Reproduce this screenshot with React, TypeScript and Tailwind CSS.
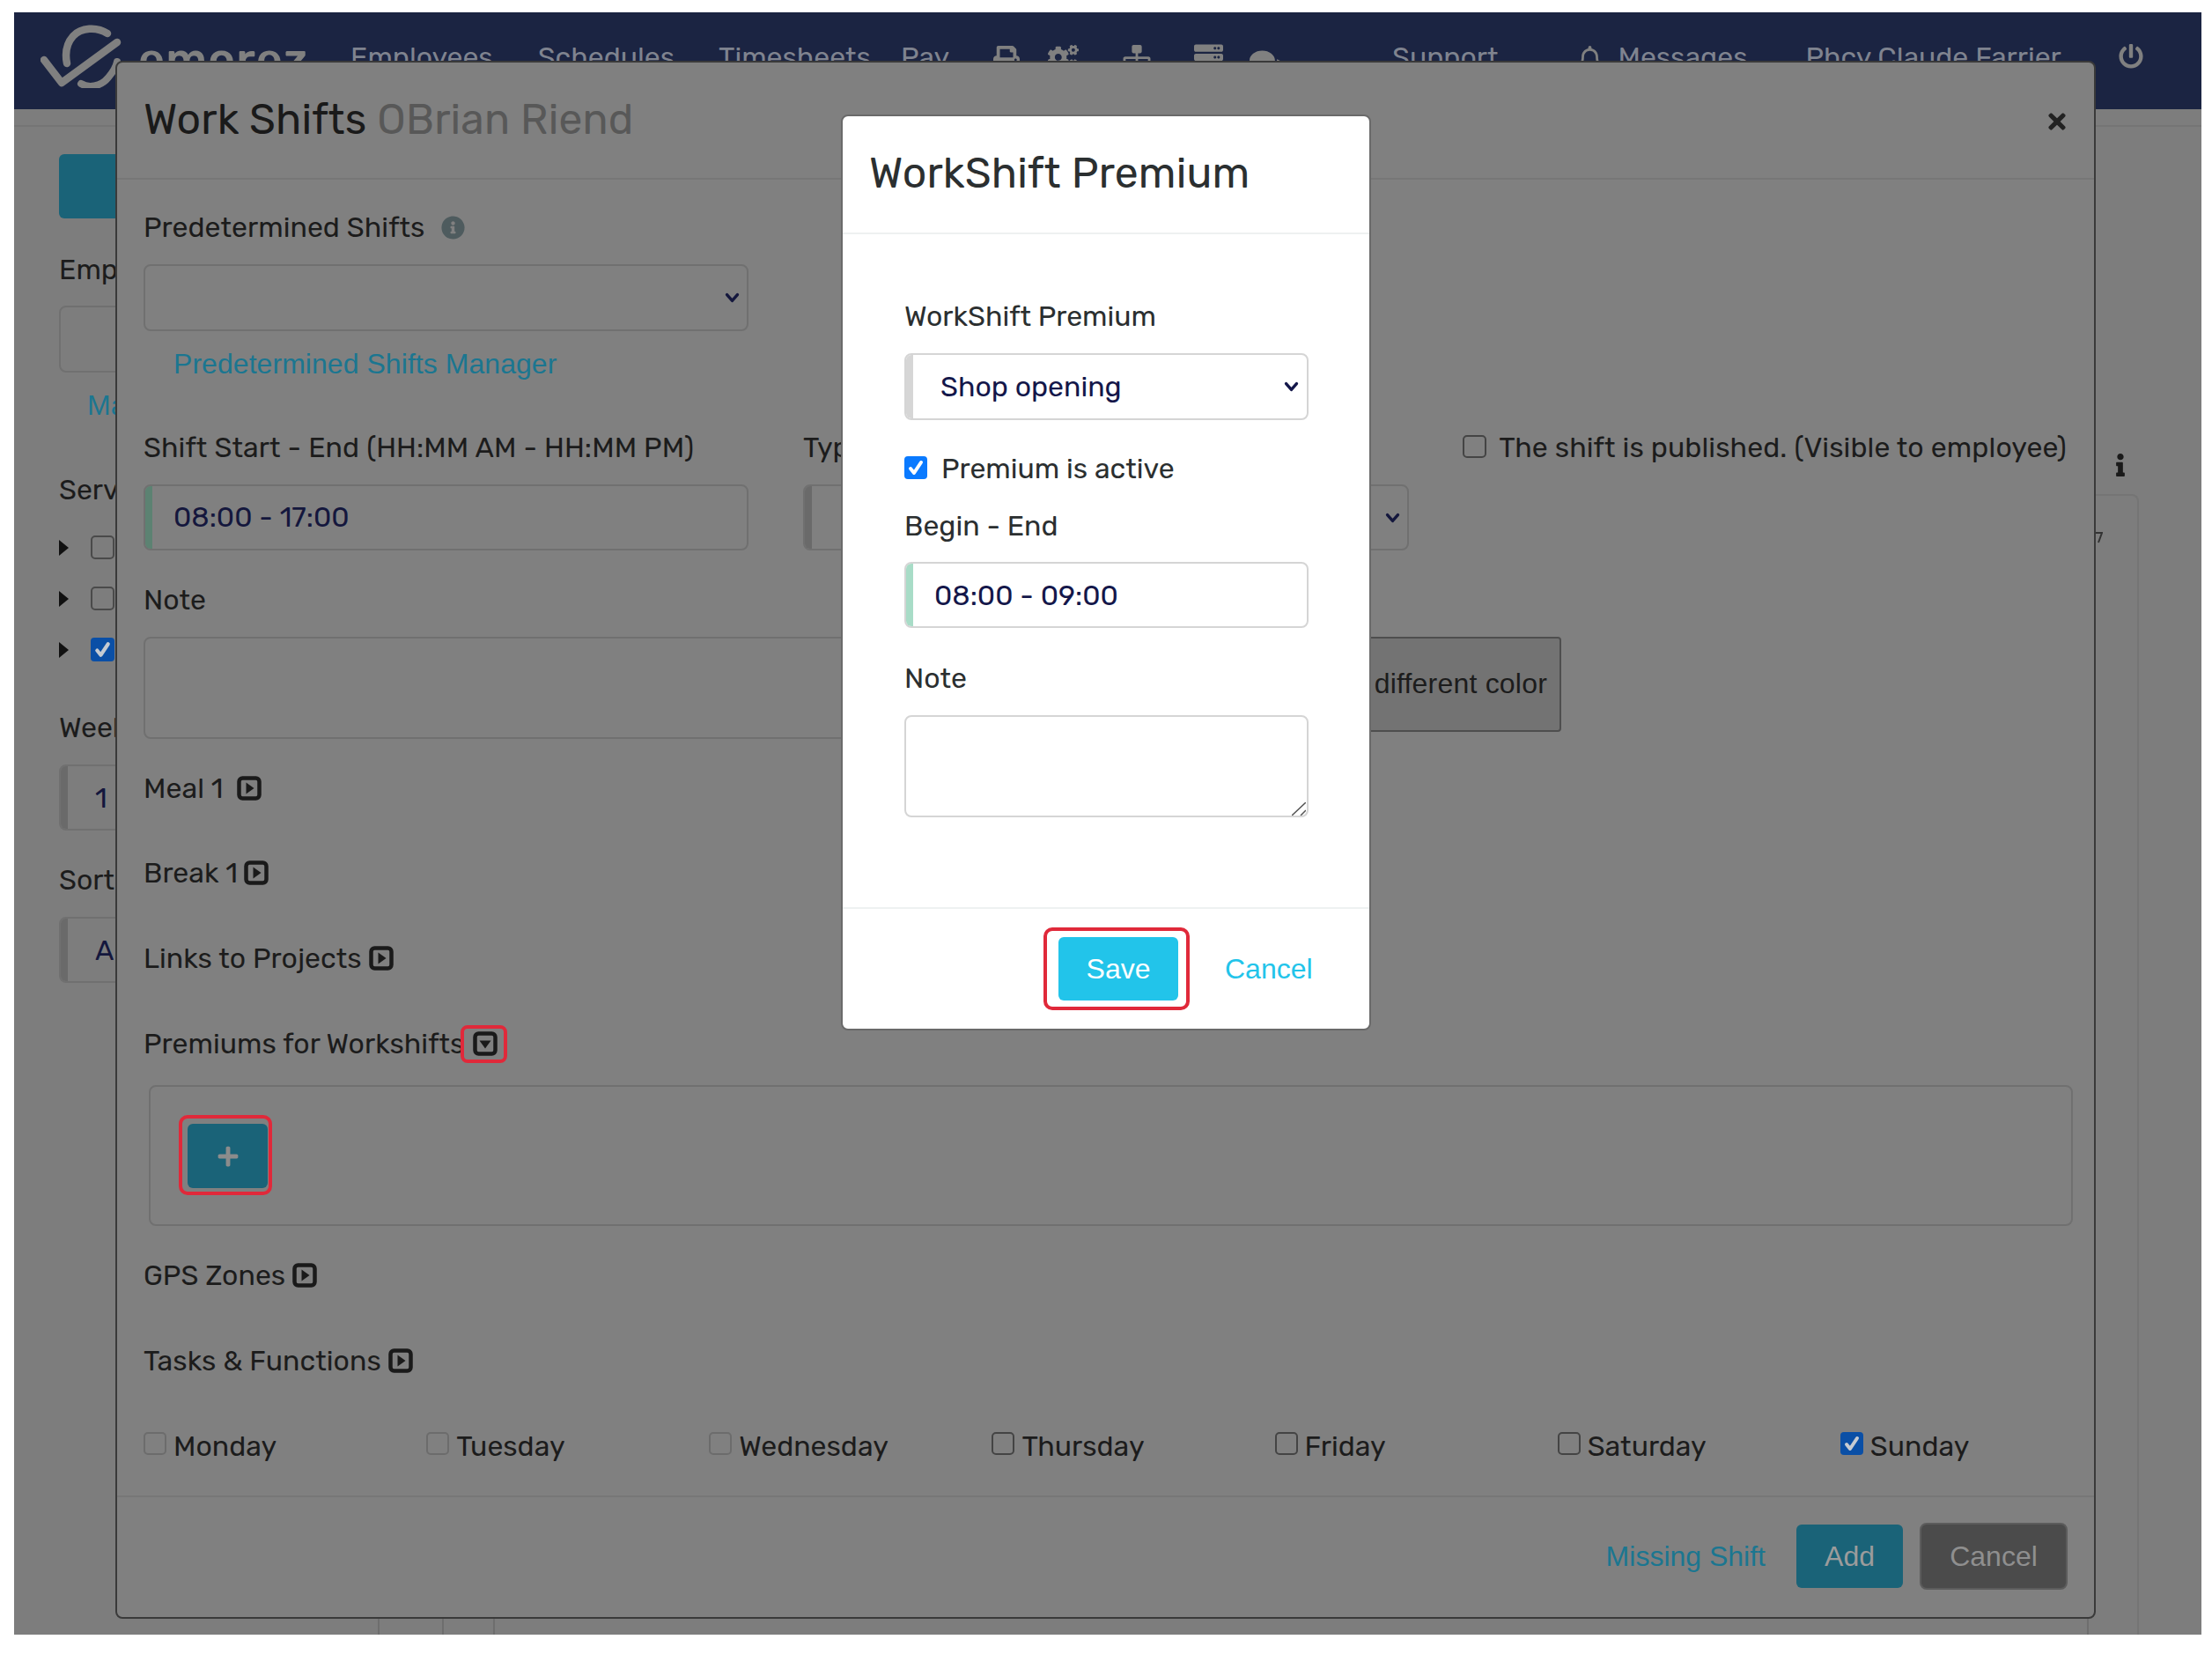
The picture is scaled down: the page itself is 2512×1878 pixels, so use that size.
import React from "react";
import { FaPrint, FaCogs, FaSitemap, FaServer, FaComments, FaRegBell, FaPowerOff, FaInfoCircle, FaInfo, FaTimes, FaPlus } from "react-icons/fa";

const sans = "font-['Rubik','Inter','Noto_Sans',sans-serif]";
const arial = "font-['Liberation_Sans',Arial,sans-serif]";

function Chevron({ className = "" }: { className?: string }) {
  return (
    <svg viewBox="0 0 20 14" className={"w-[17px] h-[12px] " + className} fill="none" stroke="currentColor" strokeWidth="4" strokeLinecap="round" strokeLinejoin="round">
      <path d="M3 3l7 8 7-8" />
    </svg>
  );
}

function Check({ bg, tick }: { bg: string; tick: string }) {
  return (
    <span className={"block w-full h-full rounded-[4px] " + bg}>
      <svg viewBox="0 0 26 26" className="w-full h-full" fill="none" stroke={tick} strokeWidth="4" strokeLinecap="round" strokeLinejoin="round">
        <path d="M7 14l4 5 8-12" />
      </svg>
    </span>
  );
}

function Box({ className = "" }: { className?: string }) {
  return <span className={"block shrink-0 rounded-[5px] border-2 " + className} />;
}

function Logo() {
  return (
    <svg viewBox="0 0 94 72" className="w-[94px] h-[72px] shrink-0" fill="none" stroke="#808080" strokeLinecap="round" strokeLinejoin="round">
      <path d="M4 40L24 66L87 20" strokeWidth="8.5" />
      <path d="M76 10C64 2 46 3 37 13C29 22 28 34 30 44" strokeWidth="8.5" />
      <path d="M46 67C54 72 68 71 77 60C83 53 86 47 87 42" strokeWidth="8" />
    </svg>
  );
}

function SquareCaret({ down = false }: { down?: boolean }) {
  return (
    <svg viewBox="0 0 28 28" className="w-[28px] h-[28px] shrink-0" fill="none">
      <rect x="2.5" y="2.5" width="23" height="23" rx="4" stroke="#1a1a1a" strokeWidth="4.5" />
      <path d={down ? "M7.5 10.5h13L14 19.5z" : "M10.5 7.5v13l9-6.5z"} fill="#1a1a1a" />
    </svg>
  );
}

function Toggle({ label, down = false, gap }: { label: string; down?: boolean; gap: string }) {
  return (
    <div className={"flex items-center h-[40px] text-[32px] leading-none tracking-[0.05px] text-[#1c1c1c] " + gap}>
      <span>{label}</span>
      {down ? (
        <span className="relative flex w-[28px] h-[28px]">
          <SquareCaret down />
          <span className="absolute left-[-14px] top-[-7px] w-[53px] h-[43px] rounded-[8px] border-4 border-[#e0293a]" />
        </span>
      ) : (
        <SquareCaret />
      )}
    </div>
  );
}

const days = [
  { d: "Monday", faint: true, on: false },
  { d: "Tuesday", faint: true, on: false },
  { d: "Wednesday", faint: true, on: false },
  { d: "Thursday", faint: false, on: false },
  { d: "Friday", faint: false, on: false },
  { d: "Saturday", faint: false, on: false },
  { d: "Sunday", faint: false, on: true },
];

function Field({ bar, children, className = "" }: { bar: string; children?: React.ReactNode; className?: string }) {
  return (
    <div className={"flex overflow-hidden rounded-[8px] border-2 " + className}>
      <span className={"w-[8px] shrink-0 " + bar} />
      {children}
    </div>
  );
}

function TreeCaret() {
  return (
    <svg viewBox="0 0 11 18" className="w-[11px] h-[18px] shrink-0">
      <path d="M0 0L11 9L0 18z" fill="#111" />
    </svg>
  );
}

export default function App() {
  return (
    <div className={"relative w-[2512px] h-[1878px] bg-white overflow-hidden " + sans}>
      <div className="ml-[16px] mr-[12px] mt-[14px] h-[1842px] bg-[#7d7d7d] flex flex-col">
        {/* top navigation */}
        <header className="h-[110px] shrink-0 bg-[#1b2442] flex items-start pl-[30px] text-[32px] leading-none text-[#7f838f]">
          <div className="mt-[14px]"><Logo /></div>
          <span className="ml-[17px] mt-[27px] w-[194px] text-[52px] leading-none font-medium text-[#808080] tracking-[1.2px]">emorez</span>
          <nav className="flex items-start mt-[27px]">
            <span className="ml-[47px] mt-[8px]">Employees</span>
            <span className="ml-[51px] mt-[8px]">Schedules</span>
            <span className="ml-[50px] mt-[8px]">Timesheets</span>
            <span className="ml-[34px] mt-[8px]">Pay</span>
            <FaPrint className="ml-[50px] mt-[11px] w-[30px] h-[30px] text-[#808080]" />
            <FaCogs className="ml-[32px] mt-[8px] w-[35px] h-[32px] text-[#808080]" />
            <FaSitemap className="ml-[47px] mt-[10px] w-[38px] h-[30px] text-[#808080]" />
            <FaServer className="ml-[46px] mt-[7px] w-[33px] h-[34px] text-[#808080]" />
            <FaComments className="ml-[30px] mt-[14px] w-[40px] h-[36px] text-[#808080]" />
            <span className="ml-[122px] mt-[8px]">Support</span>
            <FaRegBell className="ml-[90px] mt-[11px] w-[29px] h-[30px] text-[#808080]" />
            <span className="ml-[17px] mt-[8px]">Messages</span>
            <span className="ml-[66px] mt-[8px]">Phcy Claude Farrier</span>
            <FaPowerOff className="ml-[65px] mt-[8px] w-[28px] h-[30px] text-[#808080]" />
          </nav>
        </header>

        {/* page beneath the dialogs */}
        <main className="flex-1 flex border-t-2 border-[#757575] mt-[18px] text-[32px] leading-none text-[#1c1c1c]">
          <aside className="w-[116px] pl-[51px] overflow-hidden">
            <div className="mt-[31px] w-[100px] h-[73px] bg-[#1a6378] rounded-[6px]" />
            <div className="mt-[41px] h-[34px] leading-[34px]">Employee</div>
            <div className="mt-[24px] w-[100px] h-[76px] border-2 border-[#707070] rounded-[8px]" />
            <div className={"mt-[20px] ml-[32px] h-[34px] leading-[34px] text-[#1b7690] " + arial}>Manager</div>
            <div className="mt-[62px] h-[34px] leading-[34px]">Services</div>
            <div className="mt-[35px] flex flex-col gap-[31px]">
              {[false, false, true].map((on, i) => (
                <div key={i} className="flex items-center gap-[25px] h-[27px]">
                  <TreeCaret />
                  {on ? (
                    <span className="w-[27px] h-[27px] shrink-0"><Check bg="bg-[#0a4fa6]" tick="#c5cbd2" /></span>
                  ) : (
                    <Box className="w-[27px] h-[27px] border-[#4a4a4a]" />
                  )}
                </div>
              ))}
            </div>
            <div className="mt-[58px] h-[34px] leading-[34px]">Week</div>
            <Field bar="bg-[#6a6a6a]" className="mt-[25px] w-[100px] h-[75px] border-[#707070]">
              <span className="ml-[31px] self-center text-[#14173d]">1</span>
            </Field>
            <div className="mt-[39px] h-[34px] leading-[34px]">Sort</div>
            <Field bar="bg-[#6a6a6a]" className="mt-[25px] w-[100px] h-[75px] border-[#707070]">
              <span className="ml-[31px] self-center text-[#14173d]">A</span>
            </Field>
          </aside>
          <div className="flex-1 flex">
            <div className="ml-auto mr-[71px] w-[60px] mt-[417px] border-r-2 border-t-2 rounded-tr-[8px] border-[#757575]" />
          </div>
        </main>
      </div>

      {/* pieces visible around the first dialog */}
      <div className="absolute left-[429px] top-[1837px] h-[19px] flex">
        <span className="w-[2px] bg-[#6e6e6e]" />
        <span className="w-[2px] bg-[#6e6e6e] ml-[71px]" />
        <span className="w-[2px] bg-[#6e6e6e] ml-[56px]" />
      </div>
      <span className="absolute left-[2370px] top-[1837px] h-[19px] w-[2px] bg-[#6e6e6e]" />
      <FaInfo className="absolute left-[2401px] top-[515px] w-[14px] h-[26px] text-[#1a1a1a]" />
      <svg viewBox="0 0 8 14" className="absolute left-[2380px] top-[603px] w-[8px] h-[14px]" fill="none" stroke="#333" strokeWidth="2">
        <path d="M0 2h7L3 13" />
      </svg>

      {/* first dialog */}
      <section className="absolute left-[131px] top-[69px] w-[2249px] h-[1769px] bg-[#808080] border-2 border-[#3a3a3a] rounded-[8px] flex flex-col text-[32px] leading-none text-[#1c1c1c]">
        <div className="h-[133px] shrink-0 border-b-2 border-[#777] flex items-center justify-between pl-[30px] pr-[29px]">
          <h1 className="text-[48px] leading-none font-normal -mt-[1px] tracking-[0.15px]">
            <span className="text-[#1a1a1a]">Work Shifts</span> <span className="text-[#585858]">OBrian Riend</span>
          </h1>
          <FaTimes className="w-[26px] h-[28px] text-[#222] mt-[3px]" />
        </div>

        <div className="flex-1 pl-[30px] pr-[20px]">
          <div className="flex items-center gap-[19px] mt-[37px] h-[34px] tracking-[0.05px]">
            <span>Predetermined Shifts</span>
            <FaInfoCircle className="w-[27px] h-[27px] text-[#4e5b5e]" />
          </div>
          <div className="mt-[25px] w-[687px] h-[76px] rounded-[8px] border-2 border-[#707070] flex items-center justify-end pr-[8px] text-[#14173d]">
            <Chevron />
          </div>
          <div className={"mt-[19px] ml-[34px] h-[37px] leading-[37px] text-[32px] tracking-[0.05px] text-[#1b7690] " + arial}>Predetermined Shifts Manager</div>

          {/* shift row */}
          <div className="flex mt-[57px]">
            <div className="w-[749px]">
              <div className="h-[38px] leading-[38px] tracking-[0.1px]">Shift Start - End (HH:MM AM - HH:MM PM)</div>
              <Field bar="bg-[#5c8272]" className="mt-[23px] w-[687px] h-[75px] border-[#707070]">
                <span className="ml-[24px] self-center -mt-[2px] text-[#14173d]">08:00 - 17:00</span>
              </Field>
            </div>
            <div className="w-[688px]">
              <div className="h-[38px] leading-[38px]">Type</div>
              <Field bar="bg-[#6a6a6a]" className="mt-[23px] w-[688px] h-[75px] border-[#707070]">
                <span className="flex-1" />
                <Chevron className="self-center mr-[8px] text-[#14173d]" />
              </Field>
            </div>
            <div className="flex items-center gap-[14px] ml-auto mr-[11px] h-[38px] tracking-[0.1px]">
              <Box className="w-[27px] h-[26px] border-[#444] -mt-[3px]" />
              <span>The shift is published. (Visible to employee)</span>
            </div>
          </div>

          {/* note row */}
          <div className="h-[38px] leading-[38px] mt-[37px]">Note</div>
          <div className="flex mt-[23px] items-start">
            <div className="w-[1352px] h-[116px] rounded-[8px] border-2 border-[#707070]" />
            <div className={"w-[258px] h-[108px] rounded-[4px] bg-[#737373] border-2 border-[#4e4e4e] flex items-center justify-end pr-[14px] whitespace-nowrap tracking-[0.2px] " + arial}>
              <span className="-mt-[2px]">different color</span>
            </div>
          </div>

          <div className="mt-[36px]"><Toggle label="Meal 1" gap="gap-[15px]" /></div>
          <div className="mt-[56px]"><Toggle label="Break 1" gap="gap-[7px]" /></div>
          <div className="mt-[57px]"><Toggle label="Links to Projects" gap="gap-[8px]" /></div>
          <div className="mt-[57px]"><Toggle label="Premiums for Workshifts" down gap="gap-[10px]" /></div>

          <div className="mt-[27px] ml-[6px] w-[2185px] h-[160px] rounded-[8px] border-2 border-[#707070] flex items-center pl-[32px]">
            <div className="pl-[6px] pr-[1px] pt-[6px] pb-[4px] -mt-[1px] rounded-[10px] border-4 border-[#e0293a]">
              <button className="flex items-center justify-center w-[91px] h-[73px] rounded-[6px] bg-[#1a6378]">
                <FaPlus className="w-[26px] h-[26px] text-[#8c8c8c]" />
              </button>
            </div>
          </div>

          <div className="mt-[36px]"><Toggle label="GPS Zones" gap="gap-[8px]" /></div>
          <div className="mt-[57px]"><Toggle label="Tasks & Functions" gap="gap-[8px]" /></div>

          <div className="grid grid-cols-7 mt-[57px] w-[2248px] h-[40px]">
            {days.map((x) => (
              <div key={x.d} className="flex items-center gap-[8px]">
                {x.on ? (
                  <span className="w-[26px] h-[26px] -mt-[6px] shrink-0"><Check bg="bg-[#0a4fa6]" tick="#c5cbd2" /></span>
                ) : (
                  <Box className={"w-[26px] h-[26px] -mt-[6px] " + (x.faint ? "border-[#6c6c6c]" : "border-[#444]")} />
                )}
                <span>{x.d}</span>
              </div>
            ))}
          </div>
        </div>

        <div className={"h-[138px] shrink-0 border-t-2 border-[#777] flex items-center justify-end pr-[30px] pb-[2px] gap-[19px] " + arial}>
          <span className="text-[#1b7690] mr-[16px]">Missing Shift</span>
          <button className="w-[121px] h-[72px] rounded-[6px] bg-[#1a6378] text-[#9c9c9c]">Add</button>
          <button className="w-[168px] h-[76px] rounded-[8px] bg-[#4b4b4b] border-2 border-[#5c5c5c] text-[#8f8f8f]">Cancel</button>
        </div>
      </section>

      {/* second dialog */}
      <section className="absolute left-[955px] top-[130px] w-[602px] h-[1040px] bg-white rounded-[8px] border-2 border-[#6a6a6a] flex flex-col text-[32px] leading-none text-[#2b2f30]">
        <div className="h-[134px] shrink-0 border-b-2 border-[#eef1f1] flex items-center pl-[30px]">
          <h2 className="text-[48px] leading-none font-normal -mt-[3px] tracking-[0.2px]">WorkShift Premium</h2>
        </div>
        <div className="flex-1 pl-[70px] pr-[70px]">
          <div className="mt-[74px] h-[38px] leading-[38px]">WorkShift Premium</div>
          <Field bar="bg-[#d6d6d6]" className="mt-[23px] w-[459px] h-[76px] border-[#d5d5d5]">
            <span className="flex-1 ml-[31px] self-center text-[#14174a]">Shop opening</span>
            <Chevron className="self-center mr-[9px] text-[#14174a]" />
          </Field>
          <div className="flex items-center gap-[16px] mt-[36px] h-[38px]">
            <span className="w-[26px] h-[26px] -mt-[2px] shrink-0"><Check bg="bg-[#0a7aff]" tick="#ffffff" /></span>
            <span>Premium is active</span>
          </div>
          <div className="mt-[27px] h-[38px] leading-[38px]">Begin - End</div>
          <Field bar="bg-[#a8dcc7]" className="mt-[22px] w-[459px] h-[75px] border-[#d5d5d5]">
            <span className="ml-[24px] self-center text-[#14174a]">08:00 - 09:00</span>
          </Field>
          <div className="mt-[38px] h-[38px] leading-[38px]">Note</div>
          <div className="relative mt-[23px] w-[459px] h-[116px]">
            <textarea readOnly className="block w-full h-full resize-none rounded-[8px] border-2 border-[#d5d5d5] bg-white outline-none" />
            <svg viewBox="0 0 16 15" className="absolute right-[3px] bottom-[2px] w-[16px] h-[15px]" fill="none" stroke="#555" strokeWidth="1.5">
              <path d="M0 15L16 0M10 15l6-6" />
            </svg>
          </div>
        </div>
        <div className={"h-[138px] shrink-0 border-t-2 border-[#eef1f1] flex items-center pl-[228px] " + arial}>
          <div className="pl-[13px] pr-[9px] py-[7px] rounded-[10px] border-4 border-[#e0293a]">
            <button className="block w-[136px] h-[72px] rounded-[6px] bg-[#22c4ea] text-white">Save</button>
          </div>
          <span className="ml-[40px] text-[#22c4ea]">Cancel</span>
        </div>
      </section>
    </div>
  );
}
